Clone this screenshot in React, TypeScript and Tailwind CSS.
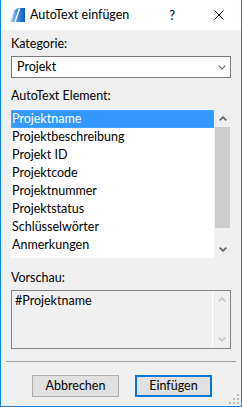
import React from "react";

const items = [
  "Projektname",
  "Projektbeschreibung",
  "Projekt ID",
  "Projektcode",
  "Projektnummer",
  "Projektstatus",
  "Schlüsselwörter",
  "Anmerkungen",
];

function Chevron({ up, color, w = 1.6 }: { up?: boolean; color: string; w?: number }) {
  return (
    <svg width="8" height="5" viewBox="0 0 8 5" className="block">
      <path
        d={up ? "M0.7 4.4 L4 1.1 L7.3 4.4" : "M0.7 0.6 L4 3.9 L7.3 0.6"}
        fill="none"
        stroke={color}
        strokeWidth={w}
      />
    </svg>
  );
}

function AppIcon() {
  return (
    <svg width="15" height="15" viewBox="0 0 15 15" className="block">
      <defs>
        <linearGradient id="ai" x1="0" y1="0" x2="1" y2="0">
          <stop offset="0" stopColor="#9fd0f6" />
          <stop offset="0.5" stopColor="#3d8fe0" />
          <stop offset="1" stopColor="#1458c0" />
        </linearGradient>
      </defs>
      <path d="M0 14 L4 3 Q6 0 9 0 L15 0 L15 14 Z" fill="url(#ai)" />
      <path d="M5 14 L9.5 0.5" stroke="#fff" strokeWidth="1.4" />
      <path d="M0.5 14 L4 4" stroke="#cfe7fb" strokeWidth="1" />
    </svg>
  );
}

export default function App() {
  return (
    <div className="relative w-[242px] h-[407px] flex flex-col border-x border-b border-[#1883d7] bg-[#f0f0f0] font-['Lato','Noto_Sans',sans-serif] text-[12.5px] leading-[16px] text-black overflow-hidden">
      {/* Title bar */}
      <div className="h-[30px] shrink-0 bg-white flex items-center">
        <div className="ml-[9px]">
          <AppIcon />
        </div>
        <span className="ml-[5px]">AutoText einfügen</span>
        <div className="ml-auto flex">
          <div className="w-[45px] h-[30px] flex items-center justify-end pr-[21px] text-[13px]">?</div>
          <div className="w-[45px] h-[30px] flex items-center justify-center">
            <svg width="10" height="10" viewBox="0 0 10 10">
              <path d="M0.5 0.5 L9.5 9.5 M9.5 0.5 L0.5 9.5" stroke="#000" strokeWidth="1" />
            </svg>
          </div>
        </div>
      </div>

      {/* Body */}
      <div className="flex-1 flex flex-col px-[10px] pt-[6px]">
        <div className="h-[16px]">Kategorie:</div>
        <div className="mt-[4px] h-[22px] border border-[#7a7a7a] bg-white flex items-center pl-[5px] pr-[4px]">
          <span className="flex-1">Projekt</span>
          <Chevron color="#606060" w={1.1} />
        </div>

        <div className="mt-[10px] h-[16px]">AutoText Element:</div>
        <div className="mt-[6px] h-[148px] flex">
          <div className="w-[203px] bg-white flex flex-col">
            {items.map((it, i) => (
              <div
                key={it}
                className={
                  i === 0
                    ? "h-[18px] shrink-0 flex items-center pl-[1px] bg-[#3399ff] text-white outline-1 outline-dotted outline-[#e38a2c] -outline-offset-1"
                    : "h-[18px] shrink-0 flex items-center pl-[1px]"
                }
              >
                {it}
              </div>
            ))}
          </div>
          <div className="w-[17px] flex flex-col bg-[#f0f0f0]">
            <div className="h-[17px] flex items-center justify-center">
              <Chevron up color="#606060" />
            </div>
            <div className="flex-1 px-[1px]">
              <div className="h-[101px] bg-[#cdcdcd]" />
            </div>
            <div className="h-[17px] flex items-center justify-center">
              <Chevron color="#606060" />
            </div>
          </div>
        </div>

        <div className="mt-[12px] h-[16px]">Vorschau:</div>
        <div className="mt-[4px] h-[59px] border border-[#828282] bg-[#f0f0f0] flex">
          <div className="flex-1 pl-[3px] pt-[2px]">#Projektname</div>
          <div className="w-[18px] border-l border-white flex flex-col justify-between">
            <div className="h-[17px] flex items-center justify-center">
              <Chevron up color="#c4c4c4" />
            </div>
            <div className="h-[17px] flex items-center justify-center">
              <Chevron color="#c4c4c4" />
            </div>
          </div>
        </div>

        <div className="mt-[12px] -mx-[5px] h-px bg-[#a0a0a0]" />

        <div className="mt-[13px] ml-[21px] flex gap-[16px]">
          <button className="w-[87px] h-[22px] border border-[#adadad] bg-[#e1e1e1] flex items-center justify-center">
            Abbrechen
          </button>
          <button className="w-[77px] h-[22px] border-2 border-[#0078d7] bg-[#e1e1e1] flex items-center justify-center">
            Einfügen
          </button>
        </div>
      </div>

      {/* Size grip */}
      <svg width="12" height="12" viewBox="0 0 12 12" className="absolute right-[1px] bottom-[1px]">
        <g fill="#b8b8b8">
          <rect x="9" y="1" width="2" height="2" />
          <rect x="5" y="5" width="2" height="2" />
          <rect x="9" y="5" width="2" height="2" />
          <rect x="1" y="9" width="2" height="2" />
          <rect x="5" y="9" width="2" height="2" />
          <rect x="9" y="9" width="2" height="2" />
        </g>
      </svg>
    </div>
  );
}
